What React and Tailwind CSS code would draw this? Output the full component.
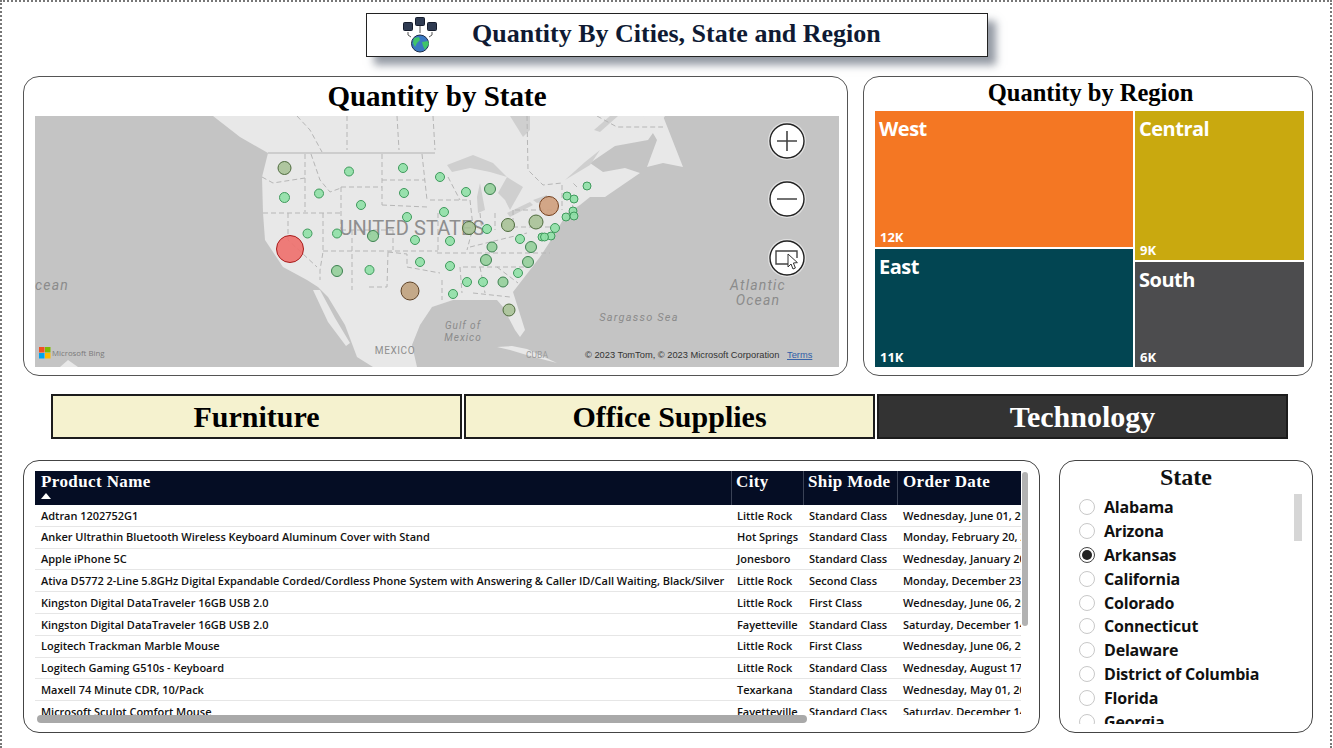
import React from 'react';

const serif = "font-['Liberation_Serif',Georgia,serif]";
const sans = "font-['Open_Sans','Noto_Sans',sans-serif]";

const rows = [
  ['Adtran 1202752G1', 'Little Rock', 'Standard Class', 'Wednesday, June 01, 2016'],
  ['Anker Ultrathin Bluetooth Wireless Keyboard Aluminum Cover with Stand', 'Hot Springs', 'Standard Class', 'Monday, February 20, 2017'],
  ['Apple iPhone 5C', 'Jonesboro', 'Standard Class', 'Wednesday, January 20, 2016'],
  ['Ativa D5772 2-Line 5.8GHz Digital Expandable Corded/Cordless Phone System with Answering & Caller ID/Call Waiting, Black/Silver', 'Little Rock', 'Second Class', 'Monday, December 23, 2019'],
  ['Kingston Digital DataTraveler 16GB USB 2.0', 'Little Rock', 'First Class', 'Wednesday, June 06, 2018'],
  ['Kingston Digital DataTraveler 16GB USB 2.0', 'Fayetteville', 'Standard Class', 'Saturday, December 14, 2019'],
  ['Logitech Trackman Marble Mouse', 'Little Rock', 'First Class', 'Wednesday, June 06, 2018'],
  ['Logitech Gaming G510s - Keyboard', 'Little Rock', 'Standard Class', 'Wednesday, August 17, 2016'],
  ['Maxell 74 Minute CDR, 10/Pack', 'Texarkana', 'Standard Class', 'Wednesday, May 01, 2019'],
  ['Microsoft Sculpt Comfort Mouse', 'Fayetteville', 'Standard Class', 'Saturday, December 14, 2019'],
];

const states = ['Alabama', 'Arizona', 'Arkansas', 'California', 'Colorado', 'Connecticut', 'Delaware', 'District of Columbia', 'Florida', 'Georgia'];

// x, y, r, fill, stroke (page coordinates, the map svg viewBox matches them)
const G = ['#8fe0a6', '#3f9a5c'];
const M = ['#93cf9a', '#3d8150'];
const O = ['#a9c297', '#4e6b3d'];
const markers = [
  [284.5, 168, 6.5, ...O], [349, 171.5, 4.5, ...G], [403, 168, 4.5, ...G], [440, 177, 4.5, ...G],
  [284.5, 197.5, 5, ...G], [319, 193.5, 4.5, ...G], [361, 205, 4.5, ...G], [404, 193, 4.5, ...G],
  [407, 217, 4.5, ...G], [307.5, 233.5, 4.5, ...G], [337, 233.5, 4.5, ...G], [373, 236, 5.5, ...M],
  [415, 240, 4.5, ...G], [420, 262, 4.5, ...G], [337, 271, 5.5, ...M], [369.5, 270, 4.5, ...G],
  [466, 192, 4.5, ...G], [490, 189, 5.5, ...M], [444, 212, 4.5, ...G], [469, 228, 6.5, ...O],
  [450, 241, 4.5, ...G], [487, 229, 4.5, ...G], [508, 225, 6.5, ...O], [536, 222, 7, ...O],
  [587, 186, 4, ...G], [567, 196, 4, ...G], [574, 199, 4, ...G], [573, 211, 4, ...G], [566, 217, 4, ...G],
  [574, 216, 4, ...G], [555, 228, 4.5, ...G], [551, 236, 4, ...G], [542, 237, 4, ...G], [544.5, 237, 4, ...G],
  [520, 239, 4.5, ...G], [531, 247, 5.5, ...M], [492, 247, 5, ...M], [486, 260, 5.5, ...M], [450, 266, 4.5, ...G],
  [528, 262, 5.5, ...M], [518, 273, 4.5, ...G], [467, 282, 4.5, ...G], [483, 282, 4.5, ...G], [503, 282, 5, ...M],
  [453, 294, 4.5, ...G], [509, 310, 6, ...O],
  [410, 291, 9, '#c0a27e', '#5f4327'], [549, 206, 9.5, '#cf9f7c', '#74401e'], [290, 249, 13.5, '#ee6f6b', '#a81c1c'],
];

const borders = [
  '297,116 310,130 322,152', '347,116 347,150', '397,116 399,150', '433,116 435,150',
  '527,116 528,170 543,185 562,183', '597,116 617,127 663,127',
  '262,177 273,183 305,178', '305,154 305,212', '263,213 340,213', '311,154 320,180 330,192 341,188',
  '341,187 382,187', '341,187 341,230', '382,154 382,205', '382,180 425,180', '422,154 427,200',
  '382,205 427,207', '288,213 288,240 317,267', '323,213 323,252 320,270 320,280', '352,230 352,290',
  '323,251 438,251', '393,230 393,250', '341,230 393,230', '388,252 387,287 367,287',
  '388,252 407,254 407,267 440,273', '438,213 438,251', '448,177 460,200', '430,200 470,200',
  '470,200 473,227 467,250', '480,213 482,233', '495,213 495,230', '513,210 513,227', '515,210 557,210',
  '513,227 550,227', '470,247 527,233', '437,253 550,253', '463,267 527,267', '460,267 462,293',
  '480,267 485,293', '497,267 518,283', '442,280 442,300', '473,293 510,297', '562,185 562,210',
  '572,197 573,210', '577,187 573,183',
];

function MapDrawing() {
  return (
    <svg viewBox="35 116 804 251" className="block w-[804px] h-[251px]">
      <rect x="35" y="116" width="804" height="251" fill="#c4c4c4" />
      {/* land */}
      <polygon
        fill="#e8e8e8"
        points="213,116 240,137 268,153 262,177 263,213 265,240 283,267 307,280 318,287 328,297 345,325 357,357 373,367 417,367 412,345 420,325 432,307 453,300 497,300 503,307 515,330 520,337 525,330 513,292 540,257 553,237 567,213 580,205 590,197 605,197 640,173 625,168 603,172 590,163 615,146 648,140 665,116"
      />
      <polygon fill="#e8e8e8" points="313,290 320,290 335,318 350,343 346,346 328,322" />
      <polygon fill="#e8e8e8" points="643,116 663,116 683,167 663,163 647,167 657,140" />
      <polygon fill="#e8e8e8" points="497,347 512,346 527,349 557,363 530,356 510,350" />
      <polygon fill="#e8e8e8" points="60,367 68,360 78,367" />
      {/* lakes */}
      <g fill="#cfcfcf">
        <polygon points="447,165 473,155 493,163 507,177 490,172 470,168 452,172" />
        <polygon points="480,183 485,210 478,213 477,197" />
        <polygon points="507,177 523,187 510,210 505,200 498,193" />
        <polygon points="507,213 530,202 533,205 510,217" />
        <polygon points="533,200 547,195 547,200 537,203" />
        <polygon points="510,116 530,116 530,130 523,137" />
        <polygon points="610,116 618,116 600,132 594,130" />
        <polygon points="565,180 590,165 600,150 585,162" />
      </g>
      <polyline points="268,153 435,153" fill="none" stroke="#cdcdcd" strokeWidth="2" />
      <g fill="none" stroke="#b6b6b6" strokeWidth="1" strokeDasharray="5 3">
        {borders.map((b, i) => <polyline key={i} points={b} />)}
      </g>
      {/* labels */}
      <text x="412" y="235" textAnchor="middle" fontFamily="Roboto, sans-serif" fontSize="20" letterSpacing="0.1" fill="#8e8e8e">UNITED STATES</text>
      <g fontFamily="Roboto, sans-serif" fontStyle="italic" fill="#8b8b8b">
        <text x="35" y="290" fontSize="14" letterSpacing="1.2">cean</text>
        <text x="758" y="290" textAnchor="middle" fontSize="14" letterSpacing="1.2">Atlantic</text>
        <text x="758" y="305" textAnchor="middle" fontSize="14" letterSpacing="1.2">Ocean</text>
        <text x="639" y="321" textAnchor="middle" fontSize="11" letterSpacing="1.2">Sargasso Sea</text>
        <text x="463" y="329" textAnchor="middle" fontSize="10" letterSpacing="1">Gulf of</text>
        <text x="463" y="341" textAnchor="middle" fontSize="10" letterSpacing="1">Mexico</text>
      </g>
      <text x="395" y="354" textAnchor="middle" fontFamily="Roboto, sans-serif" fontSize="10" letterSpacing="0.6" fill="#8e8e8e">MEXICO</text>
      <text x="537" y="358" textAnchor="middle" fontFamily="Roboto, sans-serif" fontSize="8.5" fill="#9a9a9a">CUBA</text>
      {/* markers */}
      {markers.map(([x, y, r, fill, stroke], i) => (
        <circle key={i} cx={x} cy={y} r={r} fill={fill} fillOpacity="0.9" stroke={stroke} strokeWidth="1" />
      ))}
      {/* bing logo */}
      <rect x="39" y="347" width="5.5" height="5.5" fill="#f25022" />
      <rect x="45" y="347" width="5.5" height="5.5" fill="#7fba00" />
      <rect x="39" y="353" width="5.5" height="5.5" fill="#00a4ef" />
      <rect x="45" y="353" width="5.5" height="5.5" fill="#ffb900" />
      <text x="52" y="356" fontFamily="'Open Sans', sans-serif" fontSize="7.8" fill="#7a7a7a">Microsoft Bing</text>
      <text x="585" y="358" fontFamily="'Liberation Sans', sans-serif" fontSize="9.3" fill="#333">© 2023 TomTom, © 2023 Microsoft Corporation</text>
      <text x="787" y="358" fontFamily="'Liberation Sans', sans-serif" fontSize="9.3" fill="#2f5ea8" textDecoration="underline">Terms</text>
      {/* zoom controls */}
      {[141, 199, 258].map((cy) => (
        <g key={cy}>
          <circle cx="787" cy={cy} r="19" fill="#e2e2e2" />
          <circle cx="787" cy={cy} r="17" fill="#fff" stroke="#222" strokeWidth="1.4" />
        </g>
      ))}
      <path d="M777 141h20M787 131v20M777 199h20" stroke="#444" strokeWidth="1.6" fill="none" />
      <path d="M793 264h-17v-13h21v7" stroke="#444" strokeWidth="1.4" fill="none" />
      <path d="M788 254l0 13 3-3 2 5 2.4-1-2-5 4-.4z" fill="#fff" stroke="#333" strokeWidth="1" />
    </svg>
  );
}

function TitleIcon() {
  return (
    <svg viewBox="0 0 36 36" className="w-9 h-9 shrink-0">
      <g fill="#2f3b52" stroke="#151c2c" strokeWidth="1">
        <rect x="1.5" y="5.5" width="9" height="8" rx="1" />
        <rect x="13.5" y="0.5" width="9" height="8" rx="1" />
        <rect x="25.5" y="5.5" width="9" height="8" rx="1" />
      </g>
      <path d="M18 9v7M6 15v3l3 2M30 15v3l-3 2" stroke="#555" strokeWidth="1" fill="none" />
      <circle cx="18" cy="26.5" r="8.5" fill="#3a78c2" stroke="#1c2c4a" strokeWidth="1" />
      <path d="M12 21l5-1 1 3-3 3-2 4-2-4zM20 25l6-1 1 3-4 6-2-4z" fill="#3fc46a" />
    </svg>
  );
}

function Tile({ label, value, color, className }) {
  return (
    <div className={`flex flex-col justify-between text-white font-bold ${sans} ${color} ${className}`}>
      <span className="pl-[4px] pt-[3px] text-[20px] leading-[30px] tracking-[-0.5px]">{label}</span>
      <span className="pl-[5px] pb-[2px] text-[13px] leading-[15px]">{value}</span>
    </div>
  );
}

function CategoryButton({ label, dark }) {
  return (
    <div className={`flex-1 h-[45px] flex items-center justify-center border-2 border-[#1c1c1c] text-[30px] font-bold ${serif} ${dark ? 'bg-[#333333] text-white' : 'bg-[#f5f2cf] text-black'}`}>
      {label}
    </div>
  );
}

export default function App() {
  return (
    <div className="w-[1332px] h-[748px] overflow-hidden bg-white border-2 border-b-0 border-dotted border-[#777] pl-[21px] pt-[11px]">
      {/* Title */}
      <div className="ml-[343px] w-[622px] h-[44px] flex items-center bg-white border border-[#222] shadow-[8px_8px_8px_rgba(90,100,115,0.65)] pl-[35px]">
        <TitleIcon />
        <h1 className={`ml-[34px] pb-[4px] text-[26px] font-bold text-[#0f1a33] ${serif}`}>Quantity By Cities, State and Region</h1>
      </div>

      {/* Map and treemap */}
      <div className="flex gap-[15px] mt-[19px] h-[300px]">
        <div className="w-[825px] border border-[#555] rounded-[16px] pl-[11px] pr-[8px] flex flex-col items-center">
          <h2 className={`h-[39px] leading-[38px] text-[29px] font-bold text-black ${serif}`}>Quantity by State</h2>
          <MapDrawing />
        </div>
        <div className="w-[450px] border border-[#555] rounded-[16px] pl-[11px] flex flex-col">
          <h2 className={`h-[34px] leading-[32px] text-center pr-[6px] text-[24.5px] font-bold text-black ${serif}`}>Quantity by Region</h2>
          <div className="flex gap-[2px] w-[429px] h-[256px]">
            <div className="w-[258px] flex flex-col gap-[2px]">
              <Tile label="West" value="12K" color="bg-[#f47723]" className="h-[136px]" />
              <Tile label="East" value="11K" color="bg-[#024552]" className="flex-1" />
            </div>
            <div className="flex-1 flex flex-col gap-[2px]">
              <Tile label="Central" value="9K" color="bg-[#c9a90f]" className="h-[149px]" />
              <Tile label="South" value="6K" color="bg-[#4c4c4e]" className="flex-1" />
            </div>
          </div>
        </div>
      </div>

      {/* Category slicer */}
      <div className="flex gap-[2px] mt-[18px] ml-[28px] w-[1237px]">
        <CategoryButton label="Furniture" />
        <CategoryButton label="Office Supplies" />
        <CategoryButton label="Technology" dark />
      </div>

      {/* Table and state slicer */}
      <div className="flex gap-[19px] mt-[21px] h-[273px]">
        <div className="relative w-[1017px] border border-[#444] rounded-[16px] pl-[11px] pt-[10px]">
          <div className="w-[986px] h-[244px] overflow-hidden">
            <div className={`flex w-[1040px] h-[34px] bg-[#050d24] text-white text-[17px] font-bold tracking-[0.4px] ${serif}`}>
              <div className="relative w-[697px] pl-[6px] leading-[21px] border-r border-[#3a4256]">
                Product Name
                <span className="absolute left-[6px] top-[22px] w-0 h-0 border-x-[5px] border-x-transparent border-b-[6px] border-b-white" />
              </div>
              <div className="w-[72px] pl-[4px] leading-[21px] border-r border-[#3a4256]">City</div>
              <div className="w-[94px] pl-[4px] leading-[21px] border-r border-[#3a4256] whitespace-nowrap">Ship Mode</div>
              <div className="flex-1 pl-[5px] leading-[21px]">Order Date</div>
            </div>
            {rows.map((r, i) => (
              <div key={i} className={`flex w-[1040px] h-[21.8px] items-center border-b border-[#e6e6e6] text-[11px] font-semibold text-[#111] whitespace-nowrap tracking-[-0.03px] ${sans}`}>
                <div className="w-[697px] pl-[6px] pt-[1px]">{r[0]}</div>
                <div className="w-[72px] pl-[5px] pt-[1px]">{r[1]}</div>
                <div className="w-[94px] pl-[5px] pt-[1px]">{r[2]}</div>
                <div className="flex-1 pl-[5px] pt-[1px]">{r[3]}</div>
              </div>
            ))}
          </div>
          {/* scrollbars */}
          <div className="absolute left-[998px] top-[11px] w-[6px] h-[154px] rounded-full bg-[#b2b2b2]" />
          <div className="absolute left-[13px] top-[254px] w-[770px] h-[8px] rounded-full bg-[#a9a9a9]" />
        </div>

        <div className="relative w-[254px] border border-[#444] rounded-[16px] pl-[19px]">
          <h2 className={`h-[34px] leading-[32px] text-center pr-[19px] text-[24px] font-bold text-[#111] ${serif}`}>State</h2>
          <div className="h-[229px] overflow-hidden">
            {states.map((s) => (
              <div key={s} className={`flex items-center h-[23.9px] text-[16px] font-bold text-[#111] whitespace-nowrap tracking-[-0.2px] ${sans}`}>
                {s === 'Arkansas' ? (
                  <span className="w-[16px] h-[16px] rounded-full border border-[#444] p-[2px] mr-[9px] shrink-0">
                    <span className="block w-full h-full rounded-full bg-[#222]" />
                  </span>
                ) : (
                  <span className="w-[16px] h-[16px] rounded-full border border-[#c8c8c8] mr-[9px] shrink-0" />
                )}
                {s}
              </div>
            ))}
          </div>
          <div className="absolute left-[234px] top-[33px] w-[8px] h-[47px] bg-[#d6d6d6]" />
        </div>
      </div>
    </div>
  );
}
